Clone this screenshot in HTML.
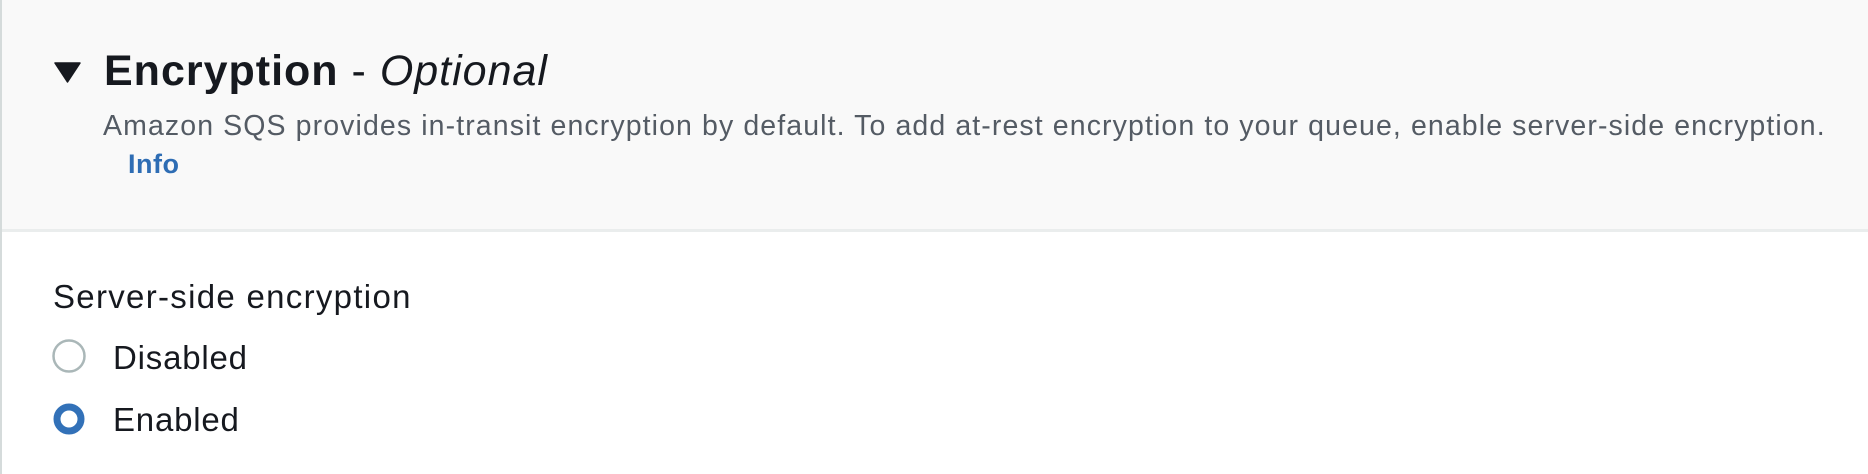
<!DOCTYPE html>
<html><head><meta charset="utf-8"><style>
html,body{margin:0;padding:0;width:1868px;height:474px;overflow:hidden;background:#fff;font-family:"Liberation Sans",sans-serif;}
.lb{position:absolute;left:0;top:0;width:2px;height:474px;background:#d5dbdb;}
.hdr{position:absolute;left:2px;top:0;width:1866px;height:229px;background:#f9f9f9;border-bottom:3px solid #eaeded;}
.t{position:absolute;white-space:nowrap;}
</style></head><body>
<div class="hdr"></div>
<div class="lb"></div>
<svg class="t" style="left:54px;top:62px" width="27" height="21"><polygon points="1,1 26,1 13.5,20" fill="#16191f" stroke="#16191f" stroke-width="1.5" stroke-linejoin="round"/></svg>
<div class="t" style="left:104px;top:46px;font-size:43px;line-height:50px;font-weight:bold;color:#16191f;letter-spacing:1px">Encryption <span style="font-weight:normal">-</span> <i style="font-weight:normal">Optional</i></div>
<div class="t" style="left:103px;top:110px;font-size:28.5px;line-height:32px;color:#545b64;letter-spacing:1.1px">Amazon SQS provides in-transit encryption by default. To add at-rest encryption to your queue, enable server-side encryption.</div>
<div class="t" style="left:128px;top:148px;font-size:27px;line-height:32px;font-weight:bold;color:#2e6db4;letter-spacing:0.5px">Info</div>
<div class="t" style="left:53px;top:278px;font-size:33px;line-height:38px;color:#16191f;letter-spacing:1.3px">Server-side encryption</div>
<svg class="t" style="left:51px;top:339px" width="36" height="100">
<circle cx="18" cy="17" r="15.5" fill="#fff" stroke="#aab7b8" stroke-width="2.5"/>
<circle cx="18" cy="80" r="12" fill="#fff" stroke="#3271b8" stroke-width="7"/>
</svg>
<div class="t" style="left:113px;top:339px;font-size:33px;line-height:38px;color:#16191f;letter-spacing:0.8px">Disabled</div>
<div class="t" style="left:113px;top:401px;font-size:33px;line-height:38px;color:#16191f;letter-spacing:0.8px">Enabled</div>
</body></html>
